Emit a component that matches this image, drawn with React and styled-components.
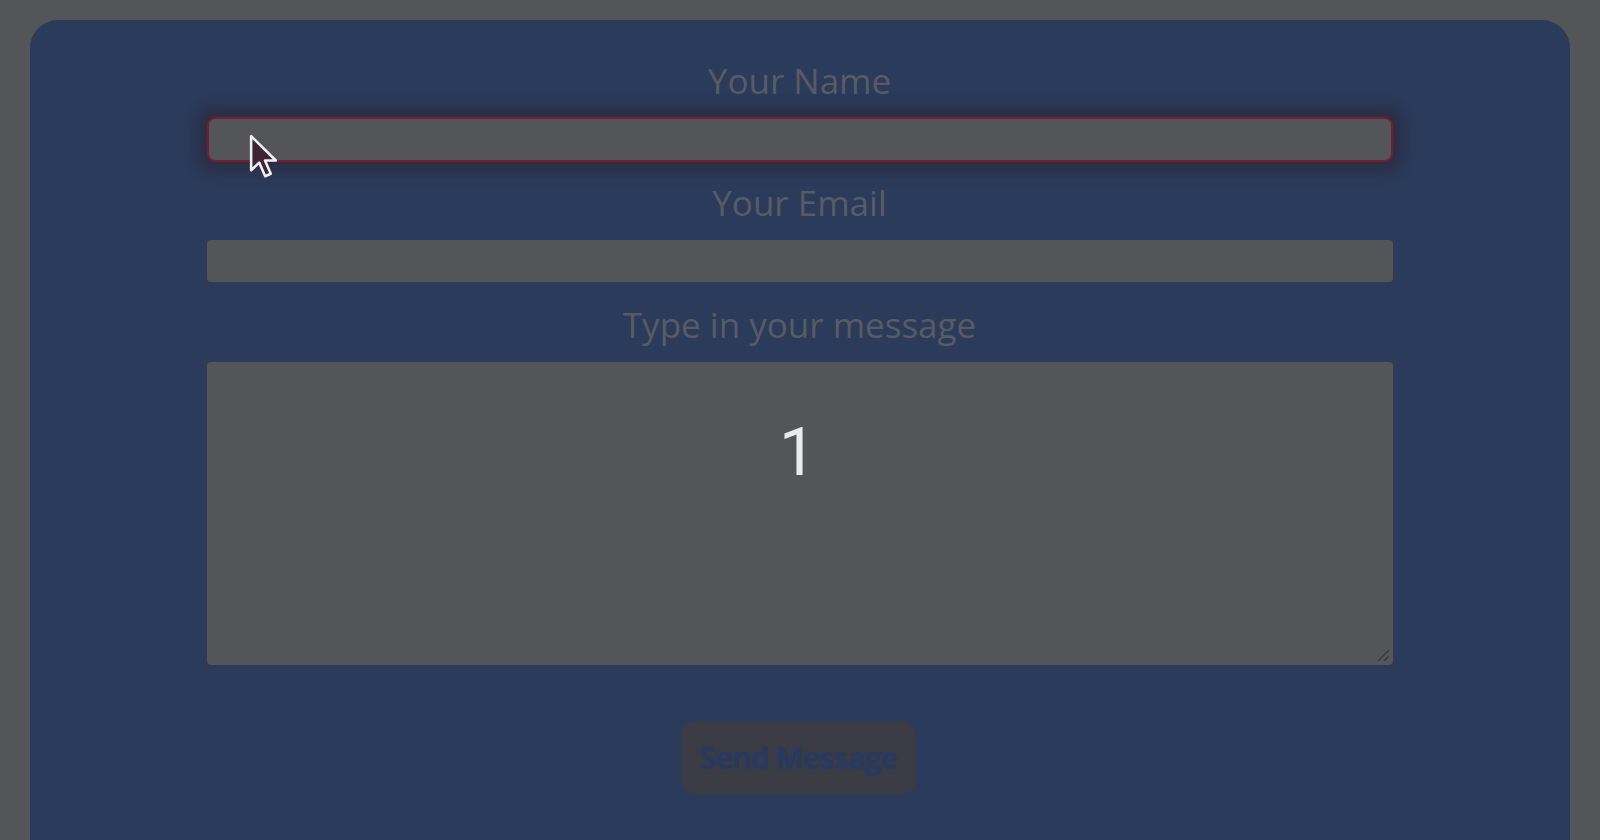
import React from "react";
import styled, { createGlobalStyle } from "styled-components";

const Global = createGlobalStyle`
  html, body { margin: 0; padding: 0; background: #545559; overflow: hidden; }
  body { font-family: "Open Sans", "Liberation Sans", sans-serif; }
  * { box-sizing: border-box; }
`;

const Page = styled.div`
  width: 1600px;
  height: 840px;
  padding: 20px 30px 0;
  position: relative;
`;

const Card = styled.div`
  background: #2a3b5b;
  border-radius: 28px 28px 0 0;
  height: 100%;
  padding-top: 41px;
  display: flex;
  justify-content: center;
`;

const Form = styled.form`
  width: 1186px;
  display: flex;
  flex-direction: column;
  align-items: stretch;
  margin-left: -1px;
`;

const Label = styled.label`
  display: block;
  text-align: center;
  color: #595b63;
  font-size: 35px;
  line-height: 40px;
  letter-spacing: 0;
  margin-bottom: ${(p) => p.$mb || 0}px;
`;

const Input = styled.div`
  height: ${(p) => (p.$focus ? 45 : 42)}px;
  background: #545559;
  border-radius: ${(p) => (p.$focus ? 8 : 4)}px;
  border: ${(p) => (p.$focus ? "2px solid #781c30" : "none")};
  box-shadow: ${(p) =>
    p.$focus ? "0 0 12px 10px rgba(46, 42, 62, 0.75)" : "none"};
  margin-bottom: ${(p) => p.$mb || 0}px;
`;

const TextArea = styled.div`
  position: relative;
  height: 303px;
  background: #545559;
  border-radius: 4px;
  display: flex;
  justify-content: center;
`;

const Grip = styled.svg`
  position: absolute;
  right: 3px;
  bottom: 3px;
`;

const Count = styled.span`
  font-family: "Roboto", "Liberation Sans", sans-serif;
  font-size: 66px;
  color: #e9ebee;
  margin-top: 58px;
  margin-left: -4px;
  line-height: 1;
  height: 66px;
`;

const ButtonRow = styled.div`
  display: flex;
  justify-content: center;
  margin-top: 56px;
`;

const Button = styled.button`
  width: 235px;
  height: 73px;
  border: none;
  border-radius: 14px;
  background: #3a3b45;
  color: #263a62;
  font-family: "Open Sans", "Liberation Sans", sans-serif;
  font-size: 30px;
  font-weight: 700;
  letter-spacing: -1px;
  padding: 0;
  margin-left: -3px;
`;

const Cursor = styled.svg`
  position: absolute;
  left: 249px;
  top: 134px;
`;

export default function App() {
  return (
    <>
      <Global />
      <Page>
        <Card>
          <Form onSubmit={(e) => e.preventDefault()}>
            <Label $mb={16}>Your Name</Label>
            <Input $focus $mb={21} />
            <Label $mb={17}>Your Email</Label>
            <Input $mb={23} />
            <Label $mb={17}>Type in your message</Label>
            <TextArea>
              <Count>1</Count>
              <Grip width="14" height="14" viewBox="0 0 14 14">
                <path d="M2 13 L13 2 M8 13 L13 8" stroke="#3a3b40" strokeWidth="1.5" />
              </Grip>
            </TextArea>
            <ButtonRow>
              <Button type="button">Send Message</Button>
            </ButtonRow>
          </Form>
        </Card>
        <Cursor width="32" height="47" viewBox="0 0 15 22">
          <path
            d="M1 1 L1 17 L4.8 13.4 L7.6 19.8 L10.2 18.6 L7.5 12.4 L12.6 12.4 Z"
            fill="#3d2534"
            stroke="#eef0f2"
            strokeWidth="1.2"
            strokeLinejoin="round"
          />
        </Cursor>
      </Page>
    </>
  );
}
